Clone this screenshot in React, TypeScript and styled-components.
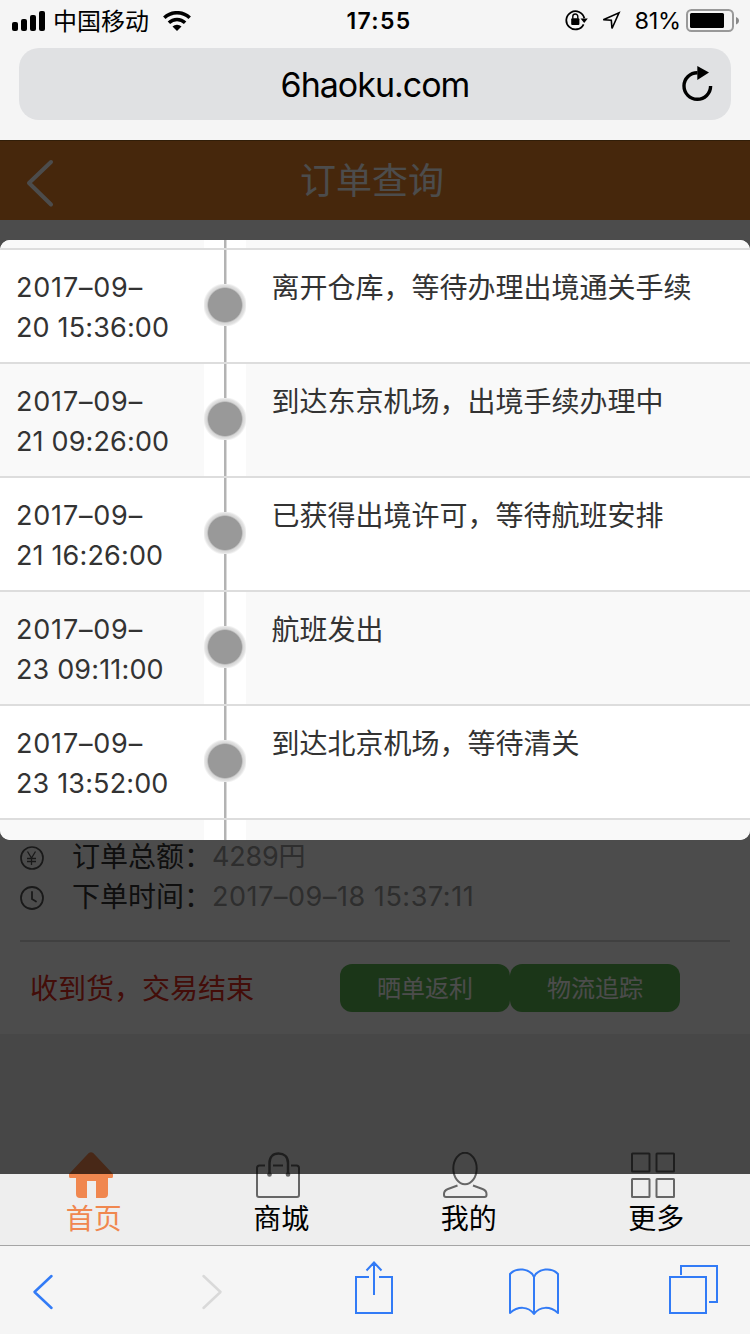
import React from 'react';
import styled, { createGlobalStyle } from 'styled-components';

const Global = createGlobalStyle`
  * { box-sizing: border-box; }
  body { margin: 0; background: #f5f5f5; font-family: Inter, "Noto Sans CJK SC", sans-serif; }
  svg { display: block; flex: none; }
`;

const Screen = styled.div`
  width: 750px;
  height: 1334px;
  display: flex;
  flex-direction: column;
  overflow: hidden;
  background: #f5f5f5;
`;

const StatusBar = styled.div`
  height: 40px;
  display: grid;
  grid-template-columns: 1fr auto 1fr;
  align-items: center;
  padding: 0 10px 0 12px;
  color: #000;
`;
const StatusGroup = styled.div<{ $end?: boolean }>`
  display: flex;
  align-items: center;
  justify-content: ${p => (p.$end ? 'flex-end' : 'flex-start')};
`;
const Carrier = styled.span`
  font-size: 24px;
  font-weight: 400;
  line-height: 40px;
  padding-top: 2px;
  margin: 0 14px 0 8px;
`;
const Clock = styled.span`
  font-size: 23px;
  font-weight: 600;
  letter-spacing: 1.3px;
  line-height: 42px;
  padding-left: 6px;
`;
const Percent = styled.span`
  font-size: 23.5px;
  letter-spacing: -0.2px;
  line-height: 42px;
  margin: 0 5px 0 13px;
`;

const AddressArea = styled.div`
  height: 100px;
  padding: 8px 19px 20px;
`;
const AddressField = styled.div`
  height: 72px;
  border-radius: 20px;
  background: #e0e1e3;
  display: grid;
  grid-template-columns: 60px 1fr 60px;
  align-items: center;
`;
const Host = styled.span`
  grid-column: 2;
  text-align: center;
  font-size: 34px;
  letter-spacing: -1px;
  color: #000;
`;

const WebView = styled.div`
  position: relative;
  height: 1105px;
  display: flex;
  flex-direction: column;
  background: #eee;
`;
const Header = styled.header`
  height: 80px;
  background: #e9822b;
  border-top: 1px solid #a5651f;
  display: grid;
  grid-template-columns: 80px 1fr 86px;
  align-items: center;
  color: #fff;
`;
const Title = styled.h1`
  margin: 0;
  text-align: center;
  font-size: 36px;
  font-weight: 400;
  line-height: 78px;
`;
const OrderCard = styled.section`
  height: 814px;
  background: #fff;
  display: flex;
  flex-direction: column;
  justify-content: flex-end;
  padding: 0 20px;
`;
const OrderLine = styled.div`
  height: 40px;
  display: flex;
  align-items: center;
  font-size: 28px;
  line-height: 40px;
`;
const OrderLabel = styled.span`
  width: 140px;
  margin-left: 27px;
  color: #333;
  white-space: nowrap;
`;
const OrderValue = styled.span<{ $track?: number }>`
  color: #999;
  font-size: 27px;
  letter-spacing: ${p => p.$track ?? 0}px;
`;
const OrderFooter = styled.div`
  height: 94px;
  margin-top: 23px;
  border-top: 2px solid #d6d6d6;
  display: flex;
  align-items: flex-start;
  padding: 22px 50px 0 10px;
`;
const OrderState = styled.span`
  flex: 1;
  font-size: 28px;
  line-height: 50px;
  color: #e02d20;
`;
const ActionButton = styled.button`
  width: 170px;
  height: 48px;
  padding: 1px 0 0;
  border: 0;
  border-radius: 12px;
  background: #5cb552;
  color: #fff;
  font: 400 24px/48px Inter, "Noto Sans CJK SC", sans-serif;
`;

const TabBar = styled.nav`
  margin-top: auto;
  height: 105px;
  display: grid;
  grid-template-columns: repeat(4, 1fr);
  background: #eee;
`;
const Tab = styled.div<{ $active?: boolean }>`
  display: flex;
  flex-direction: column;
  align-items: center;
  padding-top: 12px;
  color: ${p => (p.$active ? '#f0874f' : '#000')};
  font-size: 28px;
  line-height: 38px;
  svg { margin-right: ${p => (p.$active ? 5 : 7)}px; }
`;

const Backdrop = styled.div`
  position: absolute;
  inset: 0 0 auto;
  height: 1034px;
  background: rgba(0, 0, 0, 0.7);
`;
const Panel = styled.div`
  position: absolute;
  inset: 100px 0 auto;
  height: 600px;
  border-radius: 10px;
  overflow: hidden;
  background: #fff;
`;
const TrackRow = styled.div<{ $shade?: boolean; $height?: number }>`
  height: ${p => p.$height ?? 114}px;
  display: grid;
  grid-template-columns: 204px 42px 1fr;
  background: ${p => (p.$shade ? '#f9f9f9' : '#fff')};
  border-bottom: 2px solid #ddd;
  color: #333;
  font-size: 28px;
  line-height: 40px;
`;
const TrackTime = styled.div`
  padding: 18px 0 0 16px;
  display: flex;
  flex-direction: column;
  white-space: nowrap;
  font-size: 27px;
`;
const TimePart = styled.span<{ $track: number }>`
  letter-spacing: ${p => p.$track}px;
`;
const TrackNode = styled.div`
  display: flex;
  align-items: center;
  justify-content: center;
  background: linear-gradient(90deg, #fff 20px, #b3b3b3 20px, #b3b3b3 22px, #d9d9d9 22px, #d9d9d9 23px, #fff 23px);
`;
const Dot = styled.i`
  width: 42px;
  height: 42px;
  margin-top: -2px;
  background: radial-gradient(circle closest-side, #999 16.5px, #d6d6d6 18px, #e3e3e3 20px, #fff 22px);
`;
const TrackText = styled.div`
  padding: 18px 0 0 25.5px;
  white-space: nowrap;
`;

const BrowserBar = styled.footer`
  height: 89px;
  border-top: 1px solid #a5a5a5;
  background: #f5f5f5;
`;

const events = [
  ['2017–09–', '20 15:36:00', '离开仓库，等待办理出境通关手续'],
  ['2017–09–', '21 09:26:00', '到达东京机场，出境手续办理中'],
  ['2017–09–', '21 16:26:00', '已获得出境许可，等待航班安排'],
  ['2017–09–', '23 09:11:00', '航班发出'],
  ['2017–09–', '23 13:52:00', '到达北京机场，等待清关'],
];

const Signal = () => (
  <svg width="33" height="20" viewBox="0 0 33 20">
    <rect x="0" y="11" width="6" height="9" rx="2" />
    <rect x="9" y="8" width="6" height="12" rx="2" />
    <rect x="18" y="4" width="6" height="16" rx="2" />
    <rect x="27" y="0" width="6" height="20" rx="2" />
  </svg>
);
const Wifi = () => (
  <svg width="28" height="20" viewBox="0 0 28 20">
    <g fill="none" stroke="#000" strokeWidth="3.5">
      <path d="M1.3 6.8a18.3 18.3 0 0 1 25.4 0" />
      <path d="M5.9 11.8a11.6 11.6 0 0 1 16.2 0" />
    </g>
    <path d="M9.5 15.6a6.6 6.6 0 0 1 9 0L14 20z" />
  </svg>
);
const RotationLock = () => (
  <svg width="24" height="22" viewBox="0 0 24 22">
    <path d="M18.6 14.3A9.1 9.1 0 1 1 19.3 8.3" fill="none" stroke="#000" strokeWidth="1.8" />
    <path d="M15.5 8.5h7.3l-3.6 4.6z" />
    <rect x="6.2" y="8.2" width="8.2" height="6.8" rx="1" />
    <path d="M7.8 8.700V6.500a2.500 2.500 0 0 1 5 0v2.200" fill="none" stroke="#000" strokeWidth="1.4" />
  </svg>
);
const LocationMark = styled.svg`
  margin-left: 12px;
`;
const Location = () => (
  <LocationMark width="20" height="20" viewBox="0 0 20 20">
    <path d="M2.300 8.700L18 1.800 11 17.500 10.300 9.300z" fill="none" stroke="#000" strokeWidth="1.6" />
  </LocationMark>
);
const Battery = () => (
  <svg width="54" height="24" viewBox="0 0 54 24">
    <rect x="1" y="1" width="46" height="21" rx="4.5" fill="none" stroke="#999" strokeWidth="2" />
    <rect x="4" y="4" width="34" height="15" rx="1.5" />
    <path d="M50 8c4 1.5 4 6 0 7.5z" fill="#888" />
  </svg>
);
const ReloadMark = styled.svg`
  margin-left: 11px;
`;
const Reload = () => (
  <ReloadMark width="32" height="38" viewBox="0 0 32 38">
    <path d="M28.600 21A13.300 13.300 0 1 1 15.500 7.700" fill="none" stroke="#000" strokeWidth="3.4" />
    <path d="M15.300 1v14L27 7.600z" />
  </ReloadMark>
);
const Back = () => (
  <svg width="80" height="80" viewBox="0 0 80 80">
    <path d="M51 21L29 42l22 21.500" fill="none" stroke="#fff" strokeWidth="4" strokeLinecap="round" strokeLinejoin="round" />
  </svg>
);
const Yen = () => (
  <svg width="25" height="25" viewBox="0 0 25 25" fill="none" stroke="#555" strokeWidth="1.7">
    <circle cx="12" cy="13" r="11" />
    <path d="M7.500 6.500l4 6.500 4-6.500M11.500 13v7M7 13.500h9M7 16.500h9" strokeWidth="1.3" />
  </svg>
);
const ClockIcon = () => (
  <svg width="25" height="25" viewBox="0 0 25 25" fill="none" stroke="#555" strokeWidth="1.8">
    <circle cx="12" cy="13" r="11" />
    <path d="M12 7v7l4 2.500" strokeLinecap="round" />
  </svg>
);
const HomeIcon = () => (
  <svg width="46" height="48" viewBox="0 0 46 48" fill="#f0874f">
    <path d="M20.500 1.200Q23 -0.800 25.500 1.200L45 22v2.500q0 1.500-1.500 1.500H40v16q0 4-4 4h-8V29h-9v17h-7q-4 0-4-4V26H2.500q-1.500 0-1.500-1.500V22z" />
  </svg>
);
const BagIcon = () => (
  <svg width="46" height="48" viewBox="0 0 46 48" fill="none" stroke="#666" strokeWidth="2">
    <path d="M10 13.500H4.500q-2.500 0-2.500 2.500V43q0 2 2 2h38q2 0 2-2V16q0-2.500-2.500-2.500H36M18 13.500h10" />
    <path d="M14.500 22V11C14.500 5 18 1.500 23.500 1.500S33 5 33 11v11" strokeWidth="2.500" />
    <circle cx="14.500" cy="22.500" r="2.300" fill="#666" stroke="none" />
    <circle cx="33" cy="22.500" r="2.300" fill="#666" stroke="none" />
  </svg>
);
const UserIcon = () => (
  <svg width="46" height="48" viewBox="0 0 46 48" fill="none" stroke="#666" strokeWidth="2">
    <ellipse cx="23" cy="16.500" rx="11.700" ry="15.800" />
    <path d="M15.500 33.500L6 37q-4 1.500-4 5v1q0 2 2 2h38.500q2 0 2-2v-1q0-3.500-4-5L31 33.500" />
  </svg>
);
const GridIcon = () => (
  <svg width="46" height="48" viewBox="0 0 46 48" fill="none" stroke="#666" strokeWidth="2">
    {[[2, 1.5], [26.5, 1.5], [2, 27], [26.5, 27]].map(([x, y]) => (
      <rect key={`${x}-${y}`} x={x} y={y} width="17.500" height="18" rx="0.500" />
    ))}
  </svg>
);
const BrowserIcons = () => (
  <svg width="750" height="88" viewBox="0 0 750 88" fill="none" stroke="#327bf6" strokeWidth="2">
    <path d="M51.500 30L34.500 46l17 16" strokeWidth="2.500" strokeLinecap="round" strokeLinejoin="round" />
    <path d="M203.500 30l17 16-17 16" stroke="#d9d9d9" strokeWidth="2.500" strokeLinecap="round" strokeLinejoin="round" />
    <path d="M369 31h-13v36h36V31h-13M374 49V17M366.500 24.500l7.500-8 7.500 8" />
    <path d="M534 68V31c-4-9-18-10-24-3v39c8-7 18-7 24 1 6-8 16-8 24-1V28c-6-7-20-6-24 3" strokeLinejoin="round" />
    <path d="M670 31h36v36h-36zM681 29v-9h36v36h-8" />
  </svg>
);

const tabs = [
  { label: '首页', icon: <HomeIcon /> },
  { label: '商城', icon: <BagIcon /> },
  { label: '我的', icon: <UserIcon /> },
  { label: '更多', icon: <GridIcon /> },
];

export default function App() {
  return (
    <Screen>
      <Global />
      <StatusBar>
        <StatusGroup>
          <Signal />
          <Carrier>中国移动</Carrier>
          <Wifi />
        </StatusGroup>
        <Clock>17:55</Clock>
        <StatusGroup $end>
          <RotationLock />
          <Location />
          <Percent>81%</Percent>
          <Battery />
        </StatusGroup>
      </StatusBar>
      <AddressArea>
        <AddressField>
          <Host>6haoku.com</Host>
          <Reload />
        </AddressField>
      </AddressArea>
      <WebView>
        <Header>
          <Back />
          <Title>订单查询</Title>
        </Header>
        <OrderCard>
          <OrderLine>
            <Yen />
            <OrderLabel>订单总额：</OrderLabel>
            <OrderValue $track={-0.2}>4289円</OrderValue>
          </OrderLine>
          <OrderLine>
            <ClockIcon />
            <OrderLabel>下单时间：</OrderLabel>
            <OrderValue $track={0.55}>2017–09–18 15:37:11</OrderValue>
          </OrderLine>
          <OrderFooter>
            <OrderState>收到货，交易结束</OrderState>
            <ActionButton>晒单返利</ActionButton>
            <ActionButton>物流追踪</ActionButton>
          </OrderFooter>
        </OrderCard>
        <TabBar>
          {tabs.map((t, i) => (
            <Tab key={t.label} $active={i === 0}>
              {t.icon}
              {t.label}
            </Tab>
          ))}
        </TabBar>
        <Backdrop />
        <Panel>
          <TrackRow $shade $height={10}>
            <span />
            <TrackNode />
          </TrackRow>
          {events.map(([day, time, text], i) => (
            <TrackRow key={time} $shade={i % 2 === 1}>
              <TrackTime>
                <TimePart $track={0.8}>{day}</TimePart>
                <TimePart $track={0.15}>{time}</TimePart>
              </TrackTime>
              <TrackNode>
                <Dot />
              </TrackNode>
              <TrackText>{text}</TrackText>
            </TrackRow>
          ))}
          <TrackRow $shade $height={22}>
            <span />
            <TrackNode />
          </TrackRow>
        </Panel>
      </WebView>
      <BrowserBar>
        <BrowserIcons />
      </BrowserBar>
    </Screen>
  );
}
